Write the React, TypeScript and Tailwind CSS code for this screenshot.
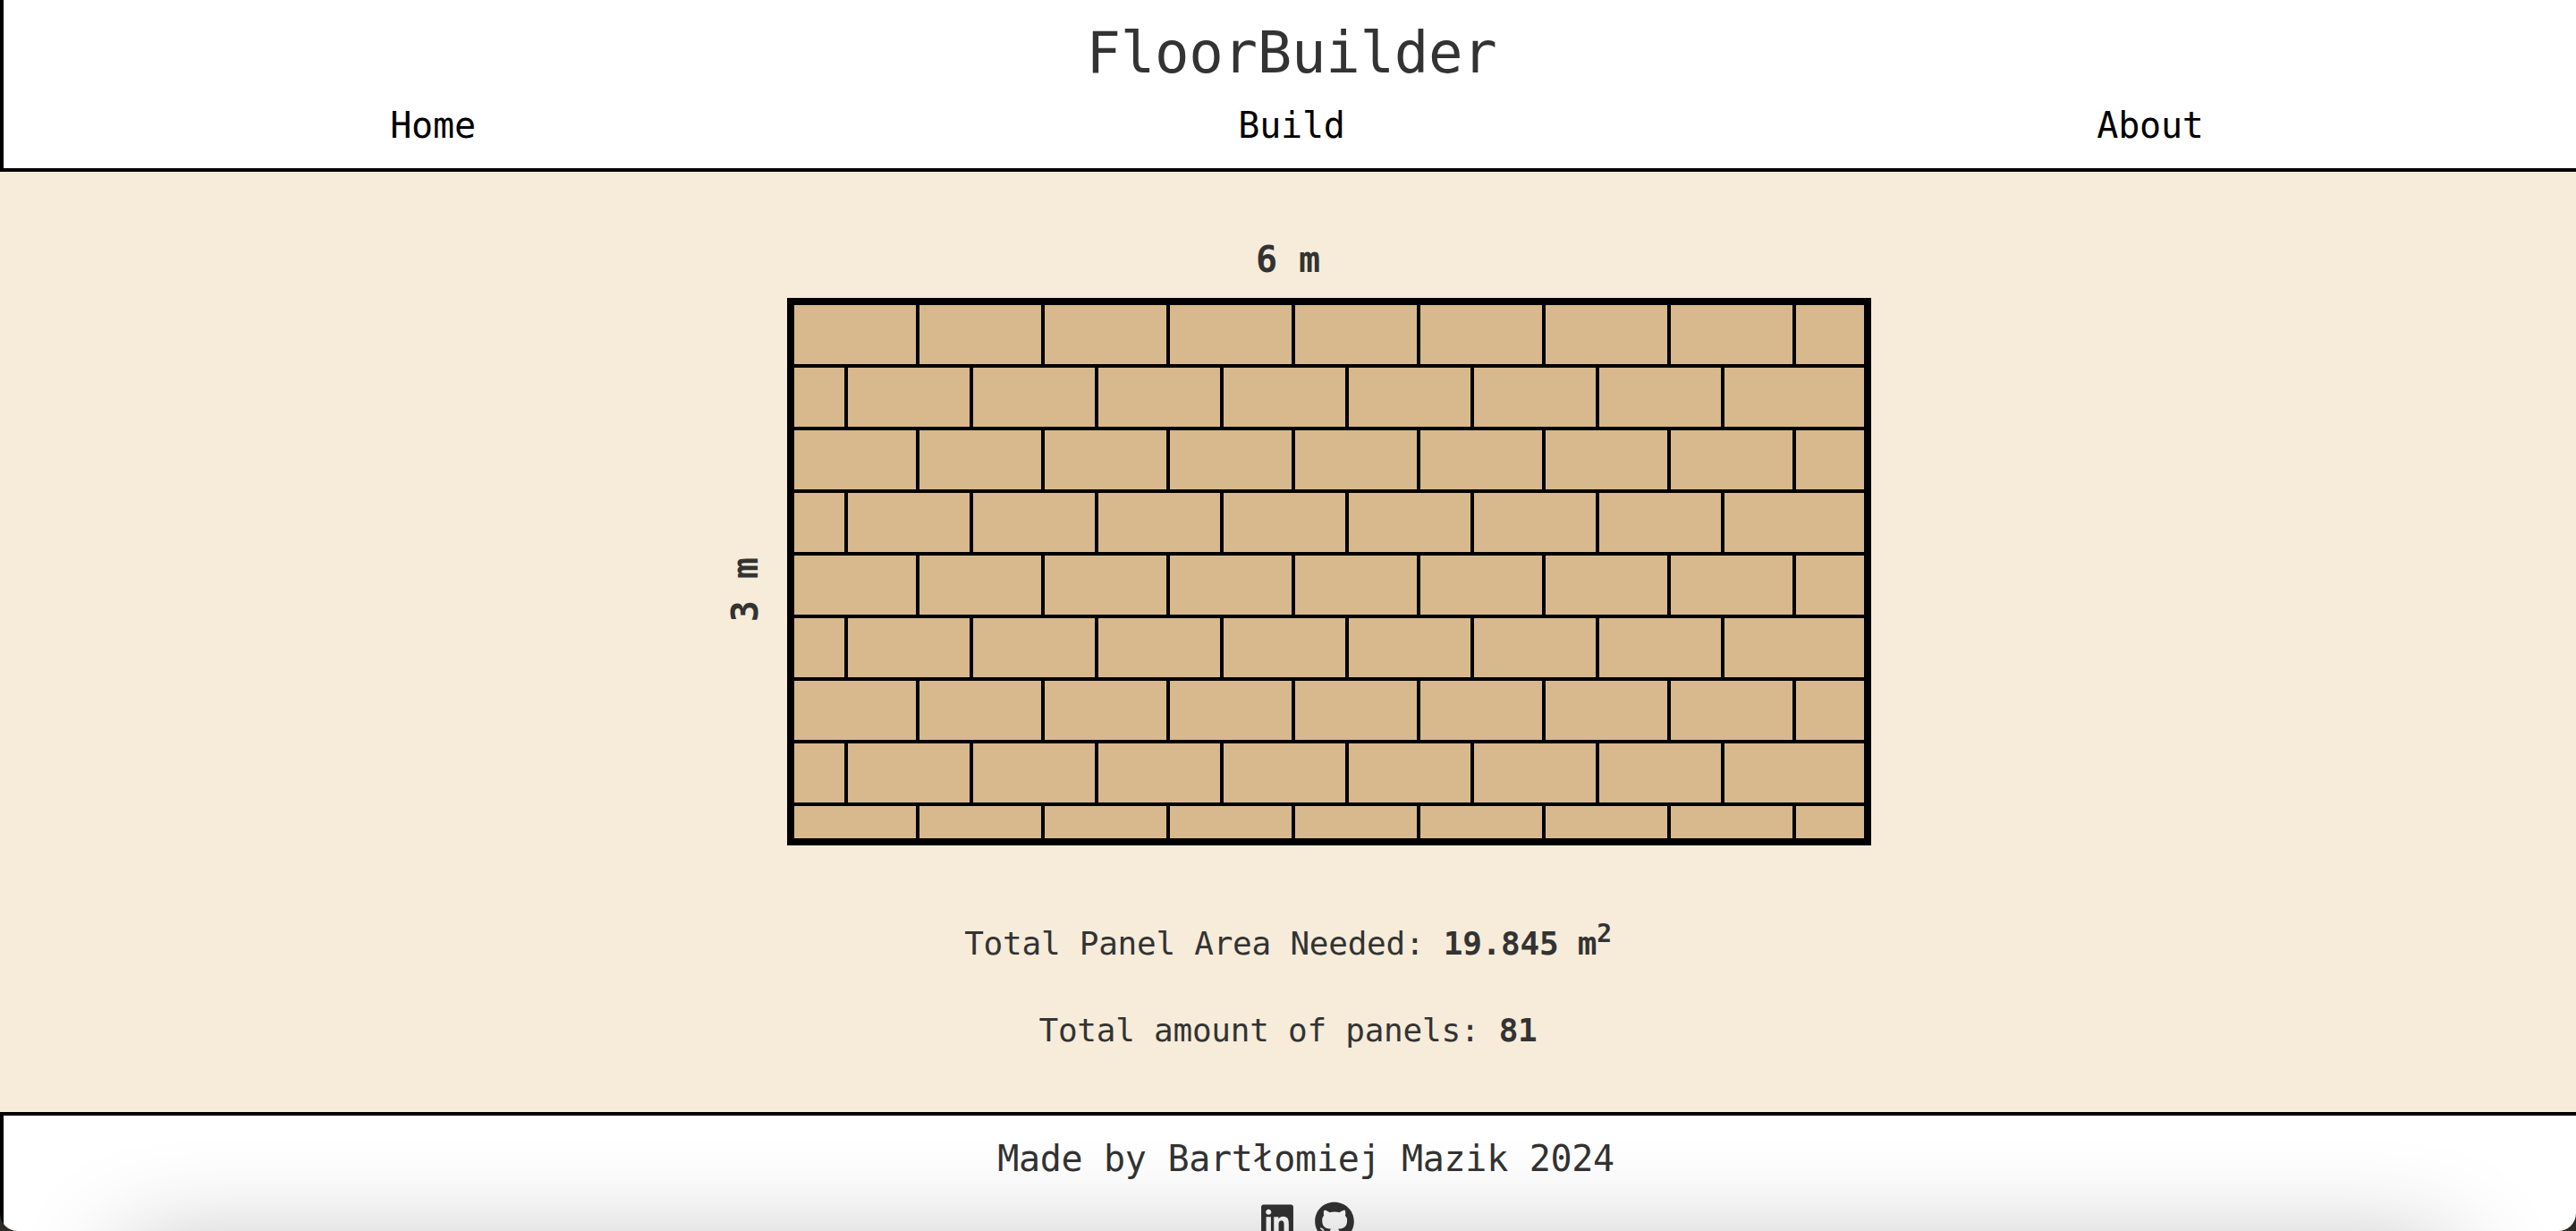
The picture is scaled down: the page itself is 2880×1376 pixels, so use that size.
import { FaGithub, FaLinkedin } from "react-icons/fa";

const mono = "font-['DejaVu_Sans_Mono','Liberation_Mono',monospace]";

// staggered rows: even rows start with full panels, odd rows with an offset cut
const evenRow = ["w-[136px]", "w-[136px]", "w-[136px]", "w-[136px]", "w-[136px]", "w-[136px]", "w-[136px]", "w-[136px]", "w-[76px]"];
const oddRow = ["w-[56px]", "w-[136px]", "w-[136px]", "w-[136px]", "w-[136px]", "w-[136px]", "w-[136px]", "w-[136px]", "w-[156px]"];
const rows = [0, 1, 2, 3, 4, 5, 6, 7, 8];

function FloorPlan() {
  return (
    <div className="flex flex-col gap-[4px] w-[1212px] h-[612px] border-[8px] border-black bg-black">
      {rows.map((row) => (
        <div key={row} className={`flex gap-[4px] ${row === 8 ? "h-[36px]" : "h-[66px]"}`}>
          {(row % 2 === 0 ? evenRow : oddRow).map((width, i) => (
            <div key={i} className={`${width} h-full bg-[#d8b98e]`} />
          ))}
        </div>
      ))}
    </div>
  );
}

export default function App() {
  return (
    <div className={`relative h-screen w-full overflow-hidden bg-white text-[#333333] ${mono}`}>
      {/* Header */}
      <header className="w-[calc(100%+8px)] border-x-4 border-b-4 border-black bg-white">
        <h1 className="pt-[27px] text-center text-[64px] leading-[64px] font-normal tracking-[-0.3px]">FloorBuilder</h1>
        <nav className="mt-[25px] mb-[24px] grid grid-cols-3 text-center text-[40px] leading-[48px] tracking-[-0.2px] text-black">
          <a>Home</a>
          <a>Build</a>
          <a>About</a>
        </nav>
      </header>

      {/* Main */}
      <main className="flex flex-col items-center bg-[#f6ecd9] pt-[74px] pb-[69px]">
        <p className="text-[40px] leading-[48px] font-bold">6 m</p>
        <div className="mt-[19px] flex items-center">
          <div className="flex w-[92px] justify-center pt-[40px] pr-[3px]">
            <span className="rotate-180 text-[40px] leading-[48px] font-bold [writing-mode:vertical-rl]">3 m</span>
          </div>
          <FloorPlan />
        </div>
        <p className="mt-[86px] text-[36px] leading-[48px] tracking-[-0.25px]">
          Total Panel Area Needed: <b>19.845 m<sup className="text-[28px] font-bold">2</sup></b>
        </p>
        <p className="mt-[49px] -mb-[2px] text-[36px] leading-[48px] tracking-[-0.25px]">
          Total amount of panels: <b>81</b>
        </p>
      </main>

      {/* Footer */}
      <footer className="flex w-[calc(100%+8px)] flex-col items-center border-x-4 border-t-4 border-black bg-white pt-[24px] pl-[32px]">
        <p className="text-[40px] leading-[48px] tracking-[-0.3px]">Made by Bartłomiej Mazik 2024</p>
        <div className="mt-[24px] flex items-start gap-[24px] pl-[4px]">
          <FaLinkedin className="mt-[1px] h-[41px] w-[36px]" />
          <FaGithub className="h-[45px] w-[44px]" />
        </div>
      </footer>

      {/* Window shadow and rounded bottom corners from the capture */}
      <div className="pointer-events-none absolute top-[1400px] left-[140px] h-[200px] w-[2600px] shadow-[0_0_120px_rgba(0,0,0,0.3)]" />
      <div className="pointer-events-none absolute inset-0 rounded-b-[20px] shadow-[0_0_0_30px_#2e2a26]" />
    </div>
  );
}
